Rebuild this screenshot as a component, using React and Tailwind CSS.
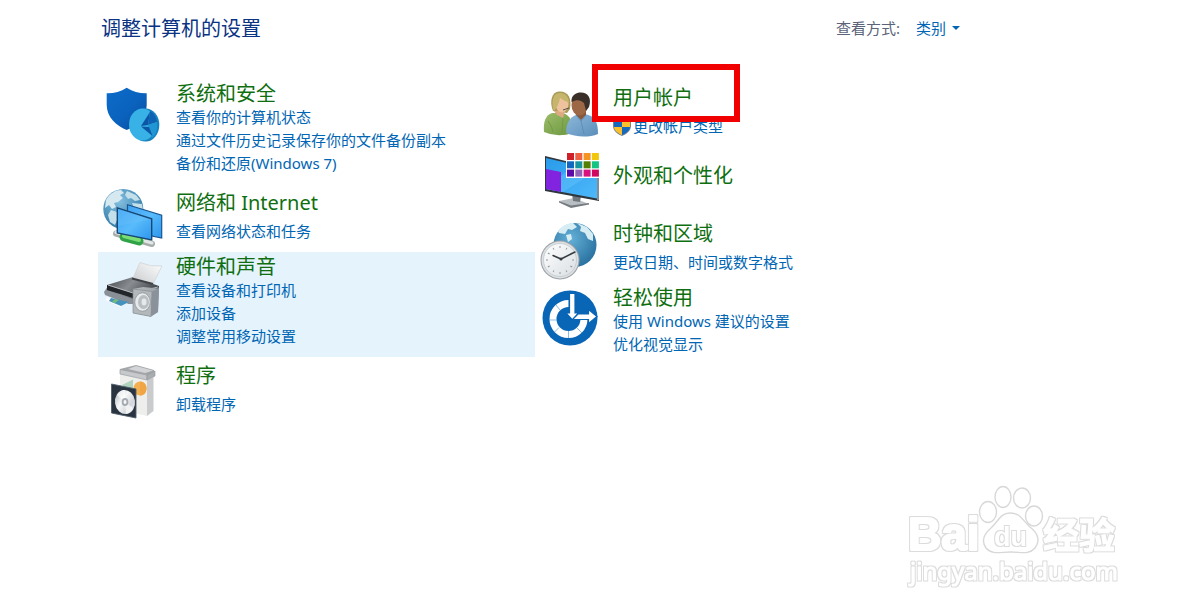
import React from "react";

const svgProps = { viewBox: "0 0 64 64", className: "h-16 w-16", "aria-hidden": true };

function SecurityIcon() {
  return (
    <svg {...svgProps}>
      <defs>
        <linearGradient id="shield" x1="0" y1="0" x2="1" y2="1">
          <stop offset="0" stopColor="#0b6cc9" />
          <stop offset="0.55" stopColor="#0a62bd" />
          <stop offset="1" stopColor="#08489a" />
        </linearGradient>
      </defs>
      <path d="M4.7 10.3C12 10.5 18.5 8.5 24.7 4.7 31 8.5 37.5 10.5 44.7 10.3V22C44.7 34 35 43 24.7 47 14.5 43 4.7 34 4.7 22Z" fill="url(#shield)" />
      <ellipse cx="43.5" cy="42" rx="13.8" ry="16.5" fill="#1681bd" />
      <ellipse cx="40.5" cy="41.5" rx="13.5" ry="16" fill="#37b1e6" />
      <path d="M39 43 48 29 46 42Z" fill="#0c55a5" />
      <path d="M46 42 48 28C52 30 54 34 55 39Z" fill="#0d62b3" />
      <path d="M46 42 55 39C56 46 54 52 50 55Z" fill="#2196d4" />
      <path d="M39 43.5 47 44 50.5 53Z" fill="#0b57a5" />
    </svg>
  );
}

function NetworkIcon() {
  return (
    <svg {...svgProps}>
      <defs>
        <radialGradient id="globeA" cx="0.4" cy="0.3" r="0.75">
          <stop offset="0" stopColor="#84bfdf" />
          <stop offset="1" stopColor="#2b76a5" />
        </radialGradient>
        <linearGradient id="screenA" x1="0" y1="0" x2="1" y2="1">
          <stop offset="0" stopColor="#3fa2f3" />
          <stop offset="0.5" stopColor="#58bbfb" />
          <stop offset="1" stopColor="#2d96ee" />
        </linearGradient>
      </defs>
      <circle cx="21.3" cy="21" r="20" fill="url(#globeA)" />
      <path d="M4 12C8 5 14 2 19 2L22 5 18 7 21 10 16 14 12 15 14 19 10 21 7 17 3 20Z" fill="#d6e9f1" />
      <path d="M25 3 34 7 38 12 33 13 29 10 26 11 23 7ZM9 22 15 24 16 30 13 37 8 34 6 27ZM30 15 40 16 41 22 32 20Z" fill="#c2dfea" />
      <path d="M25.5 16.8 59.7 27.3V50L25.5 43Z" fill="url(#screenA)" stroke="#195591" strokeWidth="1.2" />
      <path d="M14 45.5 50 56" stroke="#a6adab" strokeWidth="6" strokeLinecap="round" />
      <path d="M14 44.5 50 55" stroke="#e3e7e5" strokeWidth="3" strokeLinecap="round" />
      <path d="M22 49 37 53" stroke="#30a247" strokeWidth="9" strokeLinecap="round" />
      <path d="M22 48 37 52" stroke="#7cdd76" strokeWidth="4" strokeLinecap="round" />
      <path d="M15.3 19.8 49.7 30.8V52L15.3 45Z" fill="url(#screenA)" stroke="#174775" strokeWidth="1.4" />
      <path d="M16 21 49 31.5 16 38Z" fill="#78c8fb" opacity="0.25" />
    </svg>
  );
}

function PrinterIcon() {
  return (
    <svg {...svgProps}>
      <defs>
        <linearGradient id="paper" x1="1" y1="0" x2="0" y2="1">
          <stop offset="0" stopColor="#ffffff" />
          <stop offset="1" stopColor="#c8cacc" />
        </linearGradient>
        <linearGradient id="printer" x1="0" y1="0" x2="1" y2="0.4">
          <stop offset="0" stopColor="#44484d" />
          <stop offset="0.5" stopColor="#898d91" />
          <stop offset="1" stopColor="#414449" />
        </linearGradient>
        <linearGradient id="speaker" x1="0" y1="0" x2="1" y2="1">
          <stop offset="0" stopColor="#b4b9be" />
          <stop offset="1" stopColor="#8b9197" />
        </linearGradient>
      </defs>
      <path d="M2 36 6 30 31 40 31 48 26 48 3 39Z" fill="#8a9097" />
      <path d="M5 41 26 47 18 51 3 44Z" fill="#f8fbfd" />
      <path d="M9 42 27 46 19 50 7 45Z" fill="#4592bd" />
      <path d="M13 43 17 44 13 47 10 46Z" fill="#79bd78" />
      <path d="M5 29 31 21 57 30 56 39 31 43 5 34Z" fill="url(#printer)" />
      <path d="M5 29 31 37 56 31 55 37 31 42 5 34Z" fill="#22252a" />
      <path d="M6 29 31 37 56 31" fill="none" stroke="#b9bec2" strokeWidth="1" />
      <path d="M31 22 38 6.5Q48 11 60 10L51 28 31 23Z" fill="url(#paper)" stroke="#d2d4d6" strokeWidth="0.8" />
      <path d="M30 22.5 51 28" stroke="#3e4247" strokeWidth="2" />
      <path d="M31 33 41 31 57 32.5 56 56 49 60.5 31 57Z" fill="url(#speaker)" />
      <path d="M31 33 50 35.5 49 60.5 31 57Z" fill="#b3b8bb" stroke="#868c91" strokeWidth="0.7" />
      <path d="M50 35.5 57 32.5 56 56 49 60.5Z" fill="#8a919a" />
      <ellipse cx="40.5" cy="46" rx="7.8" ry="9.3" fill="#e5e9eb" stroke="#8b9196" strokeWidth="0.8" />
      <ellipse cx="41.5" cy="46" rx="5.5" ry="7" fill="#b9bec1" />
      <ellipse cx="42" cy="46" rx="2.5" ry="3.4" fill="#e6e9eb" />
    </svg>
  );
}

function ProgramsIcon() {
  return (
    <svg {...svgProps}>
      <defs>
        <linearGradient id="disc" x1="0" y1="0" x2="1" y2="1">
          <stop offset="0" stopColor="#a9aeb3" />
          <stop offset="0.4" stopColor="#f7f8f9" />
          <stop offset="0.7" stopColor="#d3d6da" />
          <stop offset="1" stopColor="#f6f6f6" />
        </linearGradient>
      </defs>
      <path d="M18 8 34 4 52 9V14L42 17 18 13Z" fill="#a4a7a9" />
      <path d="M34 5 51 9.5 43 12 26 8Z" fill="#d2d4d5" />
      <path d="M18 13 45 19V55L18 49Z" fill="#eeefec" />
      <path d="M45 19 51.5 16V50L45 55Z" fill="#c9cbcd" />
      <path d="M18 8.5 45 14V19L18 13Z" fill="#c6c8ca" stroke="#9b9fa2" strokeWidth="0.7" />
      <path d="M45 14 53 10V15L45 19Z" fill="#a9adb0" stroke="#8f9396" strokeWidth="0.6" />
      <path d="M20 24 31 18.5 31 30 24 28Z" fill="#b1d3bd" />
      <path d="M24 28 34 30V42L24 40Z" fill="#bcd8d2" />
      <ellipse cx="38" cy="27.5" rx="6.5" ry="7" fill="#f4b050" />
      <path d="M38 20.5C43 21 44.5 24 44.5 28 44 33 41 34.5 38 34.5Z" fill="#f0a443" />
      <path d="M9.5 23 34 28V57L9.5 52Z" fill="#293440" stroke="#50606d" strokeWidth="0.9" />
      <ellipse cx="23" cy="41" rx="10" ry="12" fill="url(#disc)" transform="rotate(-8 23 41)" />
      <path d="M23 41 15 34Q18 29 23 29ZM23 41 31 47Q28 52 24 53Z" fill="#fff" opacity="0.65" />
      <ellipse cx="23" cy="41" rx="3.3" ry="4" fill="#a4aab0" />
      <ellipse cx="23" cy="41" rx="1.5" ry="2" fill="#f6f6f6" />
    </svg>
  );
}

function UsersIcon() {
  return (
    <svg {...svgProps}>
      <defs>
        <linearGradient id="green" x1="0" y1="0" x2="1" y2="1">
          <stop offset="0" stopColor="#9dbd6a" />
          <stop offset="1" stopColor="#6b963e" />
        </linearGradient>
        <linearGradient id="blue" x1="0" y1="0" x2="1" y2="1">
          <stop offset="0" stopColor="#8eb8da" />
          <stop offset="1" stopColor="#5b8eba" />
        </linearGradient>
      </defs>
      <path d="M14 28C10 18 13 9 20 8.5 29 8 33 15 31 26L28 30Z" fill="#a99a58" />
      <path d="M5 49C4 38 7 32 13 30L24 30C31 32 34 39 34 50Q18 55 5 49Z" fill="url(#green)" />
      <path d="M15 28 26 27 24 35 18 32Z" fill="#dda981" />
      <ellipse cx="23" cy="21" rx="6.5" ry="8.5" fill="#edc29c" />
      <path d="M14 26C12 14 16 9 22 10 29 11 30 17 30 20 26 18 23 16 21 15 20 20 18 25 15 28Z" fill="#c6b56d" />
      <path d="M24 27 30 25" stroke="#444" strokeWidth="0.9" />
      <path d="M9 38Q13 43 14 49M24 35 23 50" fill="none" stroke="#6f9546" strokeWidth="0.8" />
      <path d="M27 50C27 40 31 34 37 32L46 31C56 33 59 39 59 51 49 55 36 54 27 50Z" fill="url(#blue)" />
      <path d="M36 28 47 27 47 32 42 37 37 32Z" fill="#8a5838" />
      <ellipse cx="40.5" cy="22" rx="8" ry="10.5" fill="#9c6845" />
      <path d="M32.5 19C32 12 37 9.5 42 9.5 49 9.5 53 15 50 24L47 28 45 20C42 17 38 16 32.5 19Z" fill="#3a3029" />
      <path d="M37 32 42 38 47 32M42 38 45 51" fill="none" stroke="#5988b0" strokeWidth="0.8" />
    </svg>
  );
}

const palette = [
  ["#d11f2a", "#ed6145", "#f39423", "#f3c60e"],
  ["#1268bf", "#1795a1", "#557f00", "#13c583"],
  ["#5b0aa7", "#9164b8", "#d81380", "#cf095f"],
];

function AppearanceIcon() {
  return (
    <svg {...svgProps}>
      <defs>
        <linearGradient id="screenB" x1="0" y1="0" x2="1" y2="1">
          <stop offset="0" stopColor="#289be9" />
          <stop offset="1" stopColor="#4eb8fb" />
        </linearGradient>
      </defs>
      <path d="M20 50 35 47 50 53 32 56Z" fill="#b9bec2" />
      <path d="M20 50 32 54.5 50 52 50 53.5 32 57 20 51.5Z" fill="#757b80" />
      <path d="M33 43 42 45 41 51 34 50Z" fill="#70787e" />
      <path d="M6 5 60 18V50L6 40Z" fill="#30363e" />
      <path d="M7 7 58 19V47.5L7 38Z" fill="url(#screenB)" />
      <path d="M7 38 35 14 58 19 24 41Z" fill="#72cafe" opacity="0.35" />
      <path d="M7 18 22 21V41L7 38Z" fill="#8123df" />
      <path d="M59 18V49" stroke="#b5bcc2" strokeWidth="1.3" />
      <rect x="27" y="0" width="35" height="27" fill="#fff" />
      {palette.map((row, y) =>
        row.map((color, x) => (
          <rect key={color} x={28 + x * 8.3} y={2 + y * 8.3} width="7" height="7" fill={color} />
        ))
      )}
    </svg>
  );
}

const ticks = [0, 30, 60, 90, 120, 150, 180, 210, 240, 270, 300, 330];

function ClockIcon() {
  return (
    <svg {...svgProps}>
      <defs>
        <radialGradient id="globeB" cx="0.4" cy="0.35" r="0.75">
          <stop offset="0" stopColor="#64b0d7" />
          <stop offset="1" stopColor="#236b9b" />
        </radialGradient>
        <linearGradient id="face" x1="0" y1="0" x2="1" y2="1">
          <stop offset="0" stopColor="#ffffff" />
          <stop offset="1" stopColor="#d9dfe2" />
        </linearGradient>
      </defs>
      <ellipse cx="36" cy="26" rx="21.5" ry="22" fill="url(#globeB)" />
      <path d="M19 12C24 6 29 4 34 4L38 8 33 11 29 10 26 15 20 14ZM38 4 48 8 54 15 54 22 49 20 46 14 41 12 42 8ZM27 16 32 15 33 20 29 23Z" fill="#d7edf4" />
      <circle cx="21" cy="41" r="19.5" fill="#9aa1a6" />
      <circle cx="21" cy="41" r="18.5" fill="#dde1e4" />
      <circle cx="21" cy="41" r="16.5" fill="url(#face)" stroke="#bdc3c7" strokeWidth="0.7" />
      {ticks.map((angle) => (
        <path key={angle} d="M21 27V29" stroke="#8a9196" strokeWidth="0.9" transform={`rotate(${angle} 21 41)`} />
      ))}
      <path d="M22 40 36 33M22 40 14 36.5" stroke="#353b40" strokeWidth="1.5" strokeLinecap="round" />
      <circle cx="22" cy="40" r="1.5" fill="#353b40" />
    </svg>
  );
}

function EaseIcon() {
  return (
    <svg {...svgProps}>
      <circle cx="31" cy="31" r="27.5" fill="#0965b5" />
      <path d="M29.5 16.5A15.5 15.5 0 1 0 45 32" fill="none" stroke="#fff" strokeWidth="7" />
      <path d="M10 33H18M15 45.500 20 40.500M29.500 51V44M43 46 38 41M17 18 21 23" stroke="#5b9bd2" strokeWidth="0.7" />
      <path d="M30.5 6.5H36V26H39.500L33.500 33 27 26H30.500Z" fill="#fff" stroke="#0965b5" strokeWidth="1.2" />
      <path d="M33.5 32.5 39 27H49.500V22.500L58 29.500 49.500 36.500V32.500Z" fill="#fff" stroke="#0965b5" strokeWidth="1.2" />
    </svg>
  );
}

function ShieldBadge() {
  return (
    <svg viewBox="0 0 18 18" className="h-[18px] w-[18px] shrink-0" aria-hidden="true">
      <path d="M9 0C11 2 14 2.5 18 2.5V8C18 13 13 16.5 9 18 5 16.5 0 13 0 8V2.5C4 2.5 7 2 9 0Z" fill="#79838c" />
      <path d="M9 1.5V9H1V3.5C5 3.5 7 3 9 1.5ZM9 9H17C16.5 13 12.5 15.5 9 17Z" fill="#1769bd" />
      <path d="M9 1.5C11 3 13 3.5 17 3.5V9H9ZM1 9H9V17C5.5 15.5 1.5 13 1 9Z" fill="#fbc02b" />
    </svg>
  );
}

const leftItems = [
  { title: "系统和安全", Icon: SecurityIcon, links: ["查看你的计算机状态", "通过文件历史记录保存你的文件备份副本", "备份和还原(Windows 7)"] },
  { title: "网络和 Internet", Icon: NetworkIcon, links: ["查看网络状态和任务"] },
  { title: "硬件和声音", Icon: PrinterIcon, links: ["查看设备和打印机", "添加设备", "调整常用移动设置"], active: true },
  { title: "程序", Icon: ProgramsIcon, links: ["卸载程序"] },
];

const rightItems = [
  { title: "用户帐户", Icon: UsersIcon, links: ["更改帐户类型"], shield: true, marked: true },
  { title: "外观和个性化", Icon: AppearanceIcon, links: [] },
  { title: "时钟和区域", Icon: ClockIcon, links: ["更改日期、时间或数字格式"] },
  { title: "轻松使用", Icon: EaseIcon, links: ["使用 Windows 建议的设置", "优化视觉显示"] },
];

function bodyLayout(count) {
  if (count === 0) return "justify-center pb-3";
  if (count === 1) return "gap-[5px] pt-1.5 pb-2";
  return "pt-0.5 pb-[9px]";
}

function Category({ title, Icon, links, active, shield, marked }) {
  return (
    <section className={`flex min-h-[68px] ${active ? "bg-[#e5f3fd]" : ""}`}>
      <div className="w-[78px] shrink-0 pt-1 pl-1">
        <Icon />
      </div>
      <div className={`relative flex min-w-0 flex-col items-start ${bodyLayout(links.length)}`}>
        <h2 className="text-xl leading-[25px] text-[#0f6f10]">
          <a href="#" className="hover:underline">{title}</a>
        </h2>
        {links.length > 0 && (
          <ul className="text-[15px] leading-[23px] text-[#0066b4]">
            {links.map((link) => (
              <li key={link} className="flex items-center gap-0.5">
                {shield && <ShieldBadge />}
                <a href="#" className="hover:underline">{link}</a>
              </li>
            ))}
          </ul>
        )}
        {marked && (
          <span className="pointer-events-none absolute -top-[15px] -left-[21px] h-[58px] w-[148px] border-6 border-[#f00000]" />
        )}
      </div>
    </section>
  );
}

function Watermark() {
  return (
    <svg
      viewBox="0 0 216 106"
      className="pointer-events-none absolute right-[62px] bottom-[22px] h-[106px] w-[216px]"
      fill="#fff"
      stroke="#fff"
      strokeLinejoin="round"
      role="img"
      aria-label="Baidu 经验"
    >
      <defs>
        <filter id="outline" x="-5%" y="-5%" width="110%" height="110%">
          <feMorphology in="SourceAlpha" operator="dilate" radius="1" result="grown" />
          <feGaussianBlur in="grown" stdDeviation="0.3" result="soft" />
          <feFlood floodColor="#dcdcdc" />
          <feComposite in2="soft" operator="in" result="edge" />
          <feMerge>
            <feMergeNode in="edge" />
            <feMergeNode in="SourceGraphic" />
          </feMerge>
        </filter>
      </defs>
      <g stroke="#d8d8d8" strokeWidth="1.4">
        <ellipse cx="82" cy="28" rx="8.5" ry="10.5" />
        <ellipse cx="97" cy="13" rx="8" ry="10.5" />
        <ellipse cx="116" cy="14" rx="8.5" ry="10" />
        <ellipse cx="128" cy="32" rx="8.5" ry="10" />
        <path d="M104 29C115 29 117 37 124 43 133 50 134 58 129 64 123 71 115 68 105 68 94 68 86 71 80 64 75 57 78 50 85 44 92 38 94 29 104 29Z" />
      </g>
      <g filter="url(#outline)" fontWeight="700">
        <text x="2" y="66" fontSize="46" strokeWidth="2" fontFamily="'Liberation Sans', sans-serif">Bai</text>
        <text x="88" y="62" fontSize="27" strokeWidth="0" fontFamily="'Liberation Sans', sans-serif">du</text>
        <text x="137" y="65" fontSize="36" strokeWidth="1" fontFamily="'Noto Sans CJK SC', sans-serif">经验</text>
      </g>
      <text x="4" y="96" fontSize="24" strokeWidth="1" fontFamily="'Noto Sans', sans-serif" filter="url(#outline)">jingyan.baidu.com</text>
    </svg>
  );
}

export default function App() {
  return (
    <div className="relative min-h-screen bg-white font-['Noto_Sans','Noto_Sans_CJK_SC',sans-serif]">
      <main className="ml-[98px] max-w-[874px]">
        <header className="flex items-start justify-between pt-[15px] pr-3 pl-[3px]">
          <h1 className="text-xl leading-7 text-[#0a3383]">调整计算机的设置</h1>
          <div className="flex items-center gap-4 text-[15px] leading-[26px]">
            <label htmlFor="view-mode" className="text-[#5a6378]">查看方式:</label>
            <div className="flex items-center">
              <select id="view-mode" defaultValue="类别" className="w-9 appearance-none bg-transparent text-[#0066b4]">
                <option>类别</option>
                <option>大图标</option>
                <option>小图标</option>
              </select>
              <svg viewBox="0 0 8 4" className="h-1 w-2" aria-hidden="true">
                <path d="M0 0H8L4 4Z" fill="#0066b4" />
              </svg>
            </div>
          </div>
        </header>
        <div className="mt-9 grid grid-cols-2 items-start">
          <div className="flex flex-col">
            {leftItems.map((item) => <Category key={item.title} {...item} />)}
          </div>
          <div className="flex flex-col">
            {rightItems.map((item) => <Category key={item.title} {...item} />)}
          </div>
        </div>
      </main>
      <Watermark />
    </div>
  );
}
